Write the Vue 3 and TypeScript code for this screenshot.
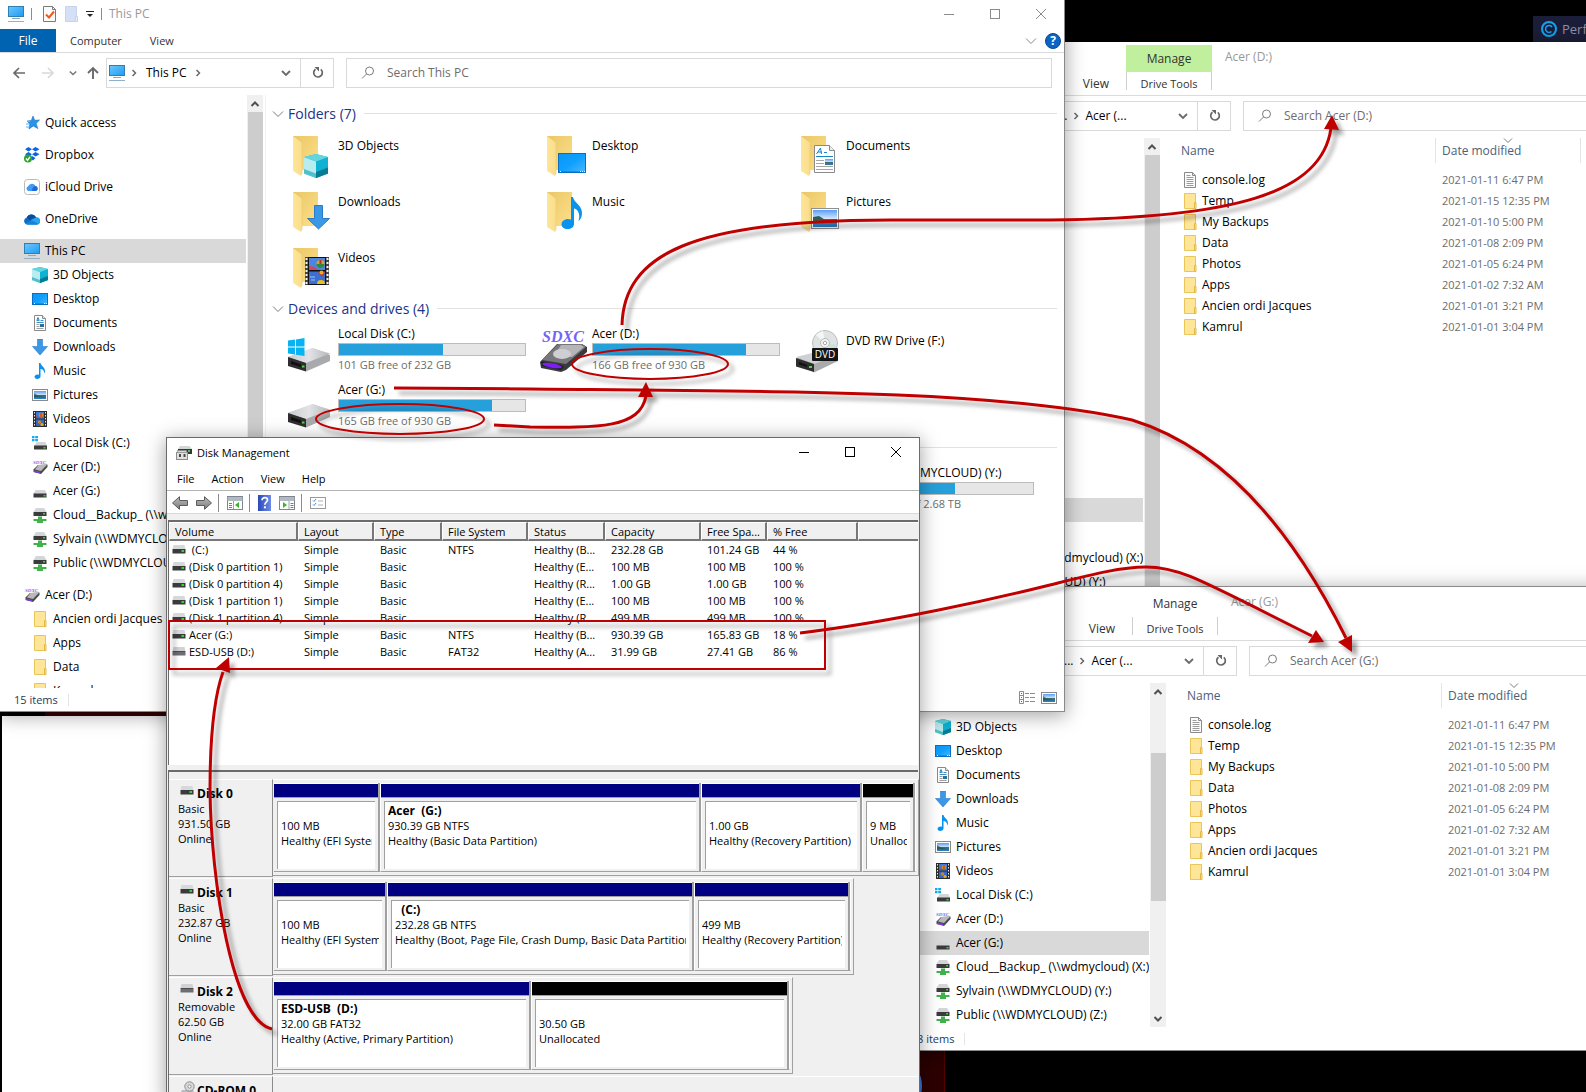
<script setup lang="ts">
interface NavItem { label: string; icon: string; level: 1 | 2; gap?: boolean }
interface Part { name: string; size: string; status: string; width: number; free?: boolean }
interface Disk { title: string; icon: string; kind: string; size: string; state: string; parts: Part[] }

const places: NavItem[] = [
  { label: '3D Objects', icon: 'cube', level: 2 },
  { label: 'Desktop', icon: 'desktop', level: 2 },
  { label: 'Documents', icon: 'document', level: 2 },
  { label: 'Downloads', icon: 'download', level: 2 },
  { label: 'Music', icon: 'music', level: 2 },
  { label: 'Pictures', icon: 'picture', level: 2 },
  { label: 'Videos', icon: 'video', level: 2 },
  { label: 'Local Disk (C:)', icon: 'localdisk', level: 2 },
]
const drives: NavItem[] = [
  { label: 'Acer (D:)', icon: 'sdxc', level: 2 },
  { label: 'Acer (G:)', icon: 'drive', level: 2 },
  { label: 'Cloud__Backup_ (\\\\wdmycloud) (X:)', icon: 'netdrive', level: 2 },
  { label: 'Sylvain (\\\\WDMYCLOUD) (Y:)', icon: 'netdrive', level: 2 },
]
const publicDrive: NavItem = { label: 'Public (\\\\WDMYCLOUD) (Z:)', icon: 'netdrive', level: 2 }

const pcNav: NavItem[] = [
  { label: 'Quick access', icon: 'star', level: 1, gap: true },
  { label: 'Dropbox', icon: 'dropbox', level: 1, gap: true },
  { label: 'iCloud Drive', icon: 'icloud', level: 1, gap: true },
  { label: 'OneDrive', icon: 'onedrive', level: 1, gap: true },
  { label: 'This PC', icon: 'pc', level: 1 },
  ...places,
  ...drives,
  { ...publicDrive, gap: true },
  { label: 'Acer (D:)', icon: 'sdxc', level: 1 },
  { label: 'Ancien ordi Jacques', icon: 'folder', level: 2 },
  { label: 'Apps', icon: 'folder', level: 2 },
  { label: 'Data', icon: 'folder', level: 2 },
  { label: 'Kamrul', icon: 'folder', level: 2 },
]

const folders = [
  { name: '3D Objects', icon: 'cube-l' },
  { name: 'Desktop', icon: 'desktop-l' },
  { name: 'Documents', icon: 'document-l' },
  { name: 'Downloads', icon: 'download-l' },
  { name: 'Music', icon: 'music-l' },
  { name: 'Pictures', icon: 'picture-l' },
  { name: 'Videos', icon: 'video-l' },
]
const devices = [
  { name: 'Local Disk (C:)', icon: 'localdisk-l', used: 56, free: '101 GB free of 232 GB' },
  { name: 'Acer (D:)', icon: 'sdxc-l', used: 82, free: '166 GB free of 930 GB' },
  { name: 'DVD RW Drive (F:)', icon: 'dvd-l', used: 0, free: '' },
  { name: 'Acer (G:)', icon: 'drive-l', used: 82, free: '165 GB free of 930 GB' },
]

const files = [
  { name: 'console.log', date: '2021-01-11 6:47 PM', icon: 'log' },
  { name: 'Temp', date: '2021-01-15 12:35 PM', icon: 'folder' },
  { name: 'My Backups', date: '2021-01-10 5:00 PM', icon: 'folder' },
  { name: 'Data', date: '2021-01-08 2:09 PM', icon: 'folder' },
  { name: 'Photos', date: '2021-01-05 6:24 PM', icon: 'folder' },
  { name: 'Apps', date: '2021-01-02 7:32 AM', icon: 'folder' },
  { name: 'Ancien ordi Jacques', date: '2021-01-01 3:21 PM', icon: 'folder' },
  { name: 'Kamrul', date: '2021-01-01 3:04 PM', icon: 'folder' },
]
const driveWindows = [
  { id: 'd', title: 'Acer (D:)', nav: drives, items: '' },
  { id: 'g', title: 'Acer (G:)', nav: [...places, ...drives, publicDrive], items: '8 items' },
]

const volumeHead = ['Volume', 'Layout', 'Type', 'File System', 'Status', 'Capacity', 'Free Spa...', '% Free', '']
const volumes = [
  ['\u00a0(C:)', 'Simple', 'Basic', 'NTFS', 'Healthy (B...', '232.28 GB', '101.24 GB', '44 %'],
  ['(Disk 0 partition 1)', 'Simple', 'Basic', '', 'Healthy (E...', '100 MB', '100 MB', '100 %'],
  ['(Disk 0 partition 4)', 'Simple', 'Basic', '', 'Healthy (R...', '1.00 GB', '1.00 GB', '100 %'],
  ['(Disk 1 partition 1)', 'Simple', 'Basic', '', 'Healthy (E...', '100 MB', '100 MB', '100 %'],
  ['(Disk 1 partition 4)', 'Simple', 'Basic', '', 'Healthy (R...', '499 MB', '499 MB', '100 %'],
  ['Acer (G:)', 'Simple', 'Basic', 'NTFS', 'Healthy (B...', '930.39 GB', '165.83 GB', '18 %'],
  ['ESD-USB (D:)', 'Simple', 'Basic', 'FAT32', 'Healthy (A...', '31.99 GB', '27.41 GB', '86 %'],
]
const disks: Disk[] = [
  { title: 'Disk 0', icon: 'hdd', kind: 'Basic', size: '931.50 GB', state: 'Online', parts: [
    { name: '', size: '100 MB', status: 'Healthy (EFI System Partition)', width: 107 },
    { name: 'Acer\u00a0 (G:)', size: '930.39 GB NTFS', status: 'Healthy (Basic Data Partition)', width: 321 },
    { name: '', size: '1.00 GB', status: 'Healthy (Recovery Partition)', width: 161 },
    { name: '', size: '9 MB', status: 'Unallocated', width: 53, free: true },
  ] },
  { title: 'Disk 1', icon: 'hdd', kind: 'Basic', size: '232.87 GB', state: 'Online', parts: [
    { name: '', size: '100 MB', status: 'Healthy (EFI System Partition)', width: 114 },
    { name: '\u00a0 (C:)', size: '232.28 GB NTFS', status: 'Healthy (Boot, Page File, Crash Dump, Basic Data Partition)', width: 307 },
    { name: '', size: '499 MB', status: 'Healthy (Recovery Partition)', width: 156 },
  ] },
  { title: 'Disk 2', icon: 'usb', kind: 'Removable', size: '62.50 GB', state: 'Online', parts: [
    { name: 'ESD-USB\u00a0 (D:)', size: '32.00 GB FAT32', status: 'Healthy (Active, Primary Partition)', width: 258 },
    { name: '', size: '30.50 GB', status: 'Unallocated', width: 258, free: true },
  ] },
]
</script>

<template>
  <div class="desktop">
    <svg class="sprite" aria-hidden="true">
      <defs>
        <linearGradient id="gScreen" x1="0" y1="0" x2="1" y2="1"><stop offset="0" stop-color="#6cc8ff" /><stop offset="1" stop-color="#1e9bf0" /></linearGradient>
        <linearGradient id="gDesk" x1="0" y1="0" x2="1" y2="1"><stop offset="0" stop-color="#0a96f5" /><stop offset=".5" stop-color="#0fa0ff" /><stop offset="1" stop-color="#4cb8ff" /></linearGradient>
        <linearGradient id="gFold" x1="0" y1="0" x2="1" y2="1"><stop offset="0" stop-color="#e9c767" /><stop offset="1" stop-color="#ffe08a" /></linearGradient>
        <linearGradient id="gFlap" x1="0" y1="0" x2="1" y2="0"><stop offset="0" stop-color="#ffe697" /><stop offset="1" stop-color="#f8dd8c" /></linearGradient>
        <linearGradient id="gTop" x1="0" y1="0" x2="1" y2="0"><stop offset="0" stop-color="#c9cacd" /><stop offset=".5" stop-color="#e2e3e6" /><stop offset="1" stop-color="#b5b6b9" /></linearGradient>
        <linearGradient id="gSky" x1="0" y1="0" x2="0" y2="1"><stop offset="0" stop-color="#5b9df5" /><stop offset=".5" stop-color="#cfe6fb" /><stop offset=".55" stop-color="#3f6d68" /><stop offset="1" stop-color="#3778b8" /></linearGradient>
        <linearGradient id="gHelp" x1="0" y1="0" x2="1" y2="0"><stop offset="0" stop-color="#2a49b8" /><stop offset="1" stop-color="#6d8be8" /></linearGradient>
        <linearGradient id="gArrow" x1="0" y1="0" x2="0" y2="1"><stop offset="0" stop-color="#bdbdbd" /><stop offset="1" stop-color="#7a7a7a" /></linearGradient>
      </defs>
      <symbol id="pc" viewBox="0 0 16 16"><rect x=".5" y=".5" width="15" height="10" fill="url(#gScreen)" stroke="#2f7fb5" /><path d="M4 12.5h8" stroke="#8ea8bd" /><path d="M0 15.500h16" stroke="#8fb0ca" /></symbol>
      <symbol id="check" viewBox="0 0 14 18"><path d="M.5 1.500h9l3 3v12H.5z" fill="#fafafa" stroke="#7a7a7a" /><path d="M9.500 1.500v3h3" fill="none" stroke="#7a7a7a" /><path d="M3 9.500l3 3 5-6" fill="none" stroke="#ee5a1c" stroke-width="2" /></symbol>
      <symbol id="newdoc" viewBox="0 0 14 18"><path d="M.5 1.500h11v11l1 4H.5z" fill="#d3e0f5" stroke="#c5d4ee" /><path d="M10.500 11.500h2v5h-2z" fill="#e8effa" stroke="#c5d4ee" /></symbol>
      <symbol id="star" viewBox="0 0 16 16"><path d="M9 1l1.700 4.300L15.500 5l-3.400 3.400 1.700 5.100L9.200 11 5 14l.8-5L3 6l4.300-.4z" fill="#2a93e8" stroke="#1674c4" stroke-width=".6" /><path d="M3 6.500h3M2 9h3M2 12h3" stroke="#58b1f5" /></symbol>
      <symbol id="dropbox" viewBox="0 0 16 16"><path d="M4.500 0L8 2.200 4.500 4.400 1 2.200zM11.500 0L15.500 2.200 11.500 4.400 8 2.200zM4.500 5L8 7.200 4.500 9.400 1 7.200zM11.500 5l4 2.200-4 2.200L8 7.200zM8 9l3.500 2L9 13.500 6 11z" fill="#0b63e8" /><circle cx="4" cy="11.500" r="4" fill="#2ea32e" /><path d="M2 11.500l1.500 1.800L6 9.800" stroke="#fff" stroke-width="1.400" fill="none" /></symbol>
      <symbol id="icloud" viewBox="0 0 16 16"><rect x=".5" y=".5" width="15" height="15" rx="3" fill="#fff" stroke="#b9b9b9" /><path d="M4.500 12a2.500 2.500 0 0 1-.3-4.800A4 4 0 0 1 11.500 7a2.600 2.600 0 0 1 .5 5z" fill="#3e9bf7" /><path d="M8 12c0-3 1.500-4.500 3.500-5a2.600 2.600 0 0 1 .5 5z" fill="#2468d8" /></symbol>
      <symbol id="onedrive" viewBox="0 0 16 16"><path d="M3.500 13.500A3.500 3.500 0 0 1 2.800 6.600 5 5 0 0 1 12 6.500a3.500 3.500 0 0 1 1 7z" fill="#0a6cc8" /><path d="M2.800 6.600A5 5 0 0 1 12 6.500L6 9.500z" fill="#0a4d9e" /><path d="M3.500 13.500l4-5 4.500-2a3.500 3.500 0 0 1 1 7z" fill="#28a4ea" /><path d="M1.500 12.500l6-3.500 7 4c-.5.400-1 .500-1.500.500h-9.500c-.8 0-1.500-.4-2-1z" fill="#1583d8" /></symbol>
      <symbol id="cube" viewBox="0 0 16 16"><path d="M8 0l8 2v11l-8 3-8-3V2z" fill="#28bcd2" /><path d="M0 2l8 3v11l-8-3z" fill="#b9ecee" /><path d="M0 10l8 3v3l-8-3z" fill="#52c0cc" /><path d="M8 5l8-3v11l-8 3z" fill="#10b2d4" /><path d="M8 12l8-3v4l-8 3z" fill="#067c92" /><path d="M8 0l8 2-8 3-8-3z" fill="#63d5de" /></symbol>
      <symbol id="desktop" viewBox="0 0 16 16"><rect x=".5" y="2.500" width="15" height="11" fill="url(#gDesk)" stroke="#0b6fc0" /><path d="M1 13h11" stroke="#0b6fc0" /><path d="M12 12.500h1M14 12.500h1M2 12.500h1" stroke="#fff" /></symbol>
      <symbol id="document" viewBox="0 0 16 16"><path d="M2.500.5h8l3 3v12h-11z" fill="#fff" stroke="#8a8a8a" /><path d="M10.500.5v3h3" fill="#e8e8e8" stroke="#8a8a8a" /><path d="M4.500 5.500h3M8.500 5.500h3M4.500 7.500h7" stroke="#3a8ec8" /><path d="M5 5l1-2.500L7 5" stroke="#1a7cc0" fill="none" /><path d="M4.500 9.500h3M4.500 11.500h3M4.500 13.500h7" stroke="#a0a0a0" /><rect x="8" y="9" width="4" height="3" fill="#2d6f9c" /></symbol>
      <symbol id="download" viewBox="0 0 16 16"><path d="M5.500 0h5v7.500H15.500L8 16 .5 7.500h5z" fill="#3a98e8" stroke="#2a7cc8" stroke-width=".6" /></symbol>
      <symbol id="music" viewBox="0 0 16 16"><path d="M7 0h1.500c.5 3 4.500 4 4.500 8 0 1-.5 2-1 2.500C12.500 7 10 6 8.500 6v7.500C8.500 15 7 16 5.200 16 3.500 16 2.500 15 2.500 13.800c0-1.300 1.300-2.300 3-2.300.6 0 1 .1 1.500.3z" fill="#0a93ee" /></symbol>
      <symbol id="picture" viewBox="0 0 16 16"><rect x=".5" y="2.500" width="15" height="11" fill="#fff" stroke="#8a8a8a" /><rect x="2" y="4" width="12" height="8" fill="url(#gSky)" /><path d="M2 6l4 2.500 8 2V12H2z" fill="#1f5a55" opacity=".7" /><path d="M2 10.500h12V12H2z" fill="#2f7ec4" /></symbol>
      <symbol id="video" viewBox="0 0 16 16"><rect x="1" y="0" width="14" height="16" fill="#2c2c2c" /><rect x="4" y="1" width="8" height="6.500" fill="#3f78d8" /><rect x="4" y="8.500" width="8" height="6.500" fill="#3566c4" /><path d="M2.500 1v14M13.500 1v14" stroke="#e8e8e8" stroke-dasharray="1.500 1.500" /><circle cx="9" cy="4" r="2.300" fill="#d88a1c" /><path d="M9 2v4" stroke="#c02a2a" /><path d="M4 5l4 2H4z" fill="#c03a4a" /><circle cx="7.500" cy="11" r="1.800" fill="#c8871e" /><circle cx="10" cy="13.500" r="1.500" fill="#e8b020" /></symbol>
      <symbol id="localdisk" viewBox="0 0 16 16"><path d="M0 1h2.500v2.200H0zM3.200 1H6v2.200H3.200zM0 4h2.500v2.200H0zM3.200 4H6v2.200H3.200z" fill="#12aef0" /><path d="M4.500 7h9l1.500 4H2.500z" fill="#d3d5d8" /><rect x="2" y="10.500" width="13" height="4" fill="#3b3b3b" /><rect x="11.500" y="12" width="2" height="1.500" fill="#2fd63a" /></symbol>
      <symbol id="drive" viewBox="0 0 16 16"><path d="M3.500 7h9.500l2 4h-13.500z" fill="#d3d5d8" /><rect x="1.500" y="10.500" width="13" height="4" fill="#3b3b3b" /><rect x="11.500" y="12" width="2" height="1.500" fill="#2fd63a" /></symbol>
      <symbol id="netdrive" viewBox="0 0 16 16"><path d="M4 1h8l2.500 4h-13z" fill="#d3d5d8" /><rect x="1.500" y="5" width="13" height="4" fill="#3b3b3b" /><rect x="11" y="6" width="2" height="1.500" fill="#2fd63a" /><path d="M6 9.500h4v2.500h4.500v2H11v2H5v-2H1.500v-2H6z" fill="#3fb24a" /></symbol>
      <symbol id="sdxc" viewBox="0 0 16 16"><text x="1" y="5" font-family="Liberation Serif, serif" font-size="5" font-style="italic" font-weight="700" fill="#7b6bf0">SDXC</text><path d="M6 6l9.500-.5V8L9 15l-7.500-2v-2.500z" fill="#4a4a4c" /><path d="M6.500 6l8.500-.3-6 6.300-6-1.500z" fill="#b9b9bd" /><path d="M2 12.200l6 1.300" stroke="#8a35f0" stroke-width="1.500" /></symbol>
      <symbol id="folder" viewBox="0 0 16 16"><path d="M2.500.5h11v15h-11z" fill="#ffe597" stroke="#eac65a" /><path d="M12.500 9.500h1.500v6h-1.500z" fill="#ffe9a8" stroke="#e3b944" /></symbol>
      <symbol id="log" viewBox="0 0 16 16"><path d="M2.500.5h8l3 3v12h-11z" fill="#fbfbfb" stroke="#8a8a8a" /><path d="M10.500.5v3h3" fill="none" stroke="#8a8a8a" /><path d="M4.500 3.500h4M4.500 5.500h7M4.500 7.500h7M4.500 9.500h7M4.500 11.500h7M4.500 13.500h7" stroke="#9c9c9c" /></symbol>
      <symbol id="hdd" viewBox="0 0 14 10"><path d="M1.500 0h11l1 4.500h-13z" fill="#d6d8dc" /><rect x=".5" y="4" width="13" height="4.500" fill="#3b3b3b" /><rect x="9.500" y="5" width="2.500" height="2" fill="#2fd63a" /></symbol>
      <symbol id="usb" viewBox="0 0 14 10"><path d="M1.500 0h11l1 4.500h-13z" fill="#d0d2d6" /><rect x=".5" y="4" width="13" height="4.500" fill="#6c6e72" /><path d="M1 4.500h12" stroke="#4c4c4c" /></symbol>
      <symbol id="cdrom" viewBox="0 0 16 16"><path d="M2 9h11l2 4v3H0v-3z" fill="#b9bbbe" /><rect x="0" y="12" width="15" height="4" fill="#3b3b3b" /><circle cx="9.500" cy="5.500" r="4.700" fill="#d9d9dc" stroke="#8c8c8c" /><circle cx="9.500" cy="5.500" r="1.600" fill="#fff" stroke="#8c8c8c" /></symbol>
      <symbol id="dm" viewBox="0 0 16 16"><path d="M4 1h9.500L16 4H2z" fill="#d3d5d8" /><rect x="2" y="4" width="14" height="5" fill="#33373a" /><rect x="12" y="5" width="2" height="2" fill="#2fd63a" /><rect x=".5" y="7.500" width="11" height="7" fill="#e0e0e0" stroke="#8c8c8c" /><rect x="1.500" y="5.500" width="9" height="2" fill="#d8d8d8" stroke="#909090" stroke-width=".6" /><path d="M3 9h2v3H3zM7.500 9h2v3h-2z" fill="#4a4a4a" /></symbol>

      <symbol id="folder-base" viewBox="0 0 48 48" overflow="visible"><path d="M3 4h25v34H3z" fill="url(#gFold)" /><path d="M3 4l9 7v31l-1 2-8-5z" fill="url(#gFlap)" /><path d="M12 11v31" stroke="#eecb6b" stroke-width=".6" /></symbol>
      <symbol id="cube-l" viewBox="0 0 48 48"><use href="#folder-base" width="48" height="48" /><use href="#cube" x="14" y="22" width="24" height="24" /></symbol>
      <symbol id="desktop-l" viewBox="0 0 48 48"><use href="#folder-base" width="48" height="48" /><rect x="14.500" y="21.500" width="27" height="19" fill="url(#gDesk)" stroke="#0b6fc0" /><path d="M15 40h26" stroke="#0b6fc0" /><path d="M16 39.500h1M36 39.500h1M38 39.500h1M40 39.500h1" stroke="#fff" /></symbol>
      <symbol id="document-l" viewBox="0 0 48 48"><use href="#folder-base" width="48" height="48" /><path d="M16.500 13.500h15l5 5v22h-20z" fill="#fff" stroke="#8a8a8a" /><path d="M31.500 13.500v5h5" fill="#eee" stroke="#8a8a8a" /><path d="M18.500 22l4-6 1 6M20 20h4M26 20.500h3M18 24.500h17" stroke="#1a84c8" fill="none" /><path d="M18 28.500h8M18 31.500h8M18 34.500h17M18 37.500h17" stroke="#a6a6a6" /><rect x="27" y="27" width="8" height="6" fill="url(#gSky)" /></symbol>
      <symbol id="download-l" viewBox="0 0 48 48"><use href="#folder-base" width="48" height="48" /><path d="M24.500 17.500h8v13h7L28.500 41 17.500 30.500h7z" fill="#3a98e8" stroke="#2a7cc8" /></symbol>
      <symbol id="music-l" viewBox="0 0 48 48"><use href="#folder-base" width="48" height="48" /><path d="M27 9h2c1 6 9 8 9 16 0 4-1.500 6.500-3.500 8 2.500-8-1.500-12-4.500-12.500V36c0 3-2.800 5-6.500 5-3.500 0-6-1.800-6-4.800 0-2.800 3-5.200 6.500-5.200 1 0 2.200.2 3 .6z" fill="#0a93ee" /></symbol>
      <symbol id="picture-l" viewBox="0 0 48 48"><use href="#folder-base" width="48" height="48" /><rect x="13.500" y="20.500" width="27" height="20" fill="#fff" stroke="#8f8f8f" /><rect x="15" y="22" width="24" height="17" fill="url(#gSky)" /><path d="M15 29l6-1 8 5 10 1v2H15z" fill="#2a5f55" /><path d="M15 35h24v4H15z" fill="#2f7ec4" /></symbol>
      <symbol id="video-l" viewBox="0 0 48 48"><use href="#folder-base" width="48" height="48" /><rect x="15" y="13" width="24" height="28" fill="#444" /><path d="M16.500 14v26M37.500 14v26" stroke="#f2f2f2" stroke-width="2" stroke-dasharray="2 2" /><rect x="18.500" y="13.500" width="17" height="13" fill="#4a86e0" stroke="#111" /><rect x="18.500" y="27" width="17" height="13.500" fill="#3c70d0" stroke="#111" /><circle cx="30.500" cy="20" r="4" fill="#e0a020" /><path d="M30.500 16v8" stroke="#b8302a" stroke-width="2" /><path d="M26.500 20a4 4 0 0 0 8 0z" fill="#2d8a42" /><path d="M19 22l6 1 3 3h-9z" fill="#d04858" /><path d="M28 28h7l-3 5z" fill="#c83028" /><circle cx="31.500" cy="28.500" r="2" fill="#e8b020" /><path d="M27 40a4 4 0 0 1 8 0z" fill="#e8c020" /><path d="M20 33h5M21 36h4" stroke="#9fc2f0" /></symbol>
      <symbol id="drive-l" viewBox="0 0 48 48" overflow="visible"><path d="M-2 30L24 21.500l16 6.500v6L16 44.500z" fill="#a9aaad" /><path d="M-2 30L22 21l18 5.500L16 36z" fill="url(#gTop)" /><path d="M-2 30l18 6v8.500l-18-5.500z" fill="#2e2e30" /><path d="M1 34l10 3.500v2.500L1 37z" fill="#101012" /><rect x="12" y="38.500" width="2.500" height="2" fill="#4fd83a" /></symbol>
      <symbol id="localdisk-l" viewBox="0 0 48 48" overflow="visible"><use href="#drive-l" width="48" height="48" /><path d="M-2 13.500l7-1v7h-7zM6 12.400l8.500-1.400v8.500H6zM-2 20.500h7v7l-7-1zM6 20.500h8.500V29L6 27.700z" fill="#06b4f2" /></symbol>
      <symbol id="sdxc-l" viewBox="0 0 48 48" overflow="visible"><path d="M13 17l25 0 5 3v5L22 43l-5 2-20-4-1-6z" fill="#3a3a3c" /><path d="M14 17h24l4 3-20 17-24-4z" fill="#77777b" /><path d="M17 18h20l3 2-12 10-17-2z" fill="#b5b5b9" /><ellipse cx="18" cy="27" rx="9" ry="5" fill="#cfcfd3" /><path d="M-3 34.500l20 3.500 3 2-3 3-19-4z" fill="#1f1f22" /><ellipse cx="8" cy="38.500" rx="10" ry="2.300" transform="rotate(10 8 38.500)" fill="#7b1ff5" /><text x="-2" y="15" font-family="Liberation Serif, serif" font-size="16" font-style="italic" font-weight="700" fill="#7466f2">SDXC</text></symbol>
      <symbol id="dvd-l" viewBox="0 0 48 48" overflow="visible"><path d="M-2 31l20-5 22 3v5L16 45.500z" fill="#a9aaad" /><path d="M-2 30l20-5 22 3L16 37z" fill="#cfd0d3" /><path d="M-2 31l18 6v8l-18-5.500z" fill="#2e2e30" /><path d="M1 35l8 3v2l-8-2.500z" fill="#101012" /><rect x="11" y="39" width="3" height="2" fill="#4fd83a" /><circle cx="27" cy="16" r="12.500" fill="#dfe3e3" stroke="#b9bdbd" /><path d="M27 16l-9-8a12 12 0 0 1 7-4z" fill="#f3f7f5" /><path d="M27 16l9 8a12 12 0 0 0 3-6z" fill="#c9e2da" /><circle cx="27" cy="16" r="4.500" fill="#f2f2f2" stroke="#b9b9b9" /><circle cx="27" cy="16" r="1.700" fill="#fff" stroke="#a9a9a9" /><rect x="14" y="21" width="26" height="13" rx="1" fill="#141414" /><text x="27" y="31" font-family="Open Sans, sans-serif" font-size="10" text-anchor="middle" fill="#fff">DVD</text></symbol>
      <symbol id="search" viewBox="0 0 14 14"><circle cx="8.500" cy="5" r="4" fill="none" stroke="#7d7d7d" /><path d="M5.500 8L1 12.500" stroke="#7d7d7d" /></symbol>
      <symbol id="refresh" viewBox="0 0 14 14"><path d="M4.500 3.200A4.300 4.300 0 1 0 9.800 3.400" fill="none" stroke="#666" stroke-width="1.700" /><path d="M3.500 1h4.500v4.500z" fill="#666" /></symbol>
      <symbol id="chev-d" viewBox="0 0 10 10"><path d="M1 3l4 4 4-4" fill="none" stroke="currentColor" stroke-width="1.800" /></symbol>
      <symbol id="chev-thin" viewBox="0 0 12 12"><path d="M1 3.500l5 5 5-5" fill="none" stroke="currentColor" /></symbol>
      <symbol id="chev-r" viewBox="0 0 10 10"><path d="M3.500 2l3 3-3 3" fill="none" stroke="#6a6a6a" stroke-width="1.500" /></symbol>
      <symbol id="tri-u" viewBox="0 0 10 10"><path d="M1.500 7L5 3.500 8.500 7" fill="none" stroke="#505050" stroke-width="2" /></symbol>
      <symbol id="min" viewBox="0 0 12 12"><path d="M1 6.500h10" stroke="currentColor" /></symbol>
      <symbol id="max" viewBox="0 0 12 12"><rect x="1.500" y="1.500" width="9" height="9" fill="none" stroke="currentColor" /></symbol>
      <symbol id="close" viewBox="0 0 12 12"><path d="M1 1l10 10M11 1L1 11" stroke="currentColor" /></symbol>
    </svg>

    <div class="tab-chip">
      <svg width="16" height="16" viewBox="0 0 16 16"><circle cx="8" cy="8" r="7" fill="none" stroke="#12a5f5" stroke-width="2" /><path d="M11 6a3.500 3.500 0 1 0-.5 4.500" fill="none" stroke="#12a5f5" stroke-width="1.500" /></svg>
      <span>Perf</span>
    </div>
    <div class="red-strip"></div>
    <div class="blank-window"></div>
    <div class="red-tile"><i></i></div>

    <section v-for="w in driveWindows" :key="w.id" class="window explorer" :class="'win-' + w.id">
      <header class="drive-ribbon">
        <div class="ribbon-left"><button class="tab">View</button></div>
        <div class="tool-tab">
          <div class="manage">Manage</div>
          <button class="tools">Drive Tools</button>
        </div>
        <h2 class="faded">{{ w.title }}</h2>
      </header>
      <div class="bar">
        <div class="address drive-address">
          <span>...</span>
          <svg class="i10"><use href="#chev-r" /></svg>
          <span class="crumb">Acer (...</span>
          <button class="drop" aria-label="Previous locations"><svg class="i10"><use href="#chev-d" /></svg></button>
          <button class="refresh" aria-label="Refresh"><svg class="i14"><use href="#refresh" /></svg></button>
        </div>
        <label class="search">
          <svg class="i14"><use href="#search" /></svg>
          <input type="text" :placeholder="'Search ' + w.title" :aria-label="'Search ' + w.title" />
        </label>
      </div>
      <div class="body">
        <nav class="tree">
          <a v-for="n in w.nav" :key="n.label" href="#" class="node l2" :class="{ on: n.label === w.title }">
            <svg class="i16"><use :href="'#' + n.icon" /></svg>{{ n.label }}
          </a>
        </nav>
        <div class="scroll">
          <svg class="i10"><use href="#tri-u" /></svg>
          <div class="thumb"></div>
          <svg class="i10 down"><use href="#tri-u" /></svg>
        </div>
        <table class="files">
          <colgroup><col class="c-name" /><col class="c-date" /><col /></colgroup>
          <thead><tr>
            <th><div class="th">Name</div></th>
            <th><div class="th">Date modified<svg class="sort" width="10" height="6" viewBox="0 0 10 6"><path d="M1 .5l4 4 4-4" fill="none" stroke="#7a7a7a" /></svg></div></th>
            <th></th>
          </tr></thead>
          <tbody>
            <tr v-for="f in files" :key="f.name">
              <td><div class="file"><svg class="i16"><use :href="'#' + f.icon" /></svg>{{ f.name }}</div></td>
              <td class="date">{{ f.date }}</td>
              <td></td>
            </tr>
          </tbody>
        </table>
      </div>
      <footer class="status"><span>{{ w.items }}</span><i v-if="w.items"></i></footer>
    </section>

    <section class="window explorer win-pc">
      <header class="title">
        <svg class="i16"><use href="#pc" /></svg><i class="sep"></i>
        <svg class="quick"><use href="#check" /></svg><svg class="quick"><use href="#newdoc" /></svg>
        <svg class="quick-more" width="8" height="8" viewBox="0 0 8 8"><path d="M0 1.500h8" stroke="#222" /><path d="M1 4h6L4 7z" fill="#222" /></svg><i class="sep"></i>
        <h2 class="faded">This PC</h2>
        <div class="caption">
          <button aria-label="Minimize"><svg class="i12"><use href="#min" /></svg></button>
          <button aria-label="Maximize"><svg class="i12"><use href="#max" /></svg></button>
          <button aria-label="Close"><svg class="i12"><use href="#close" /></svg></button>
        </div>
      </header>
      <div class="tabs">
        <button class="file-tab">File</button><button class="tab">Computer</button><button class="tab">View</button>
        <div class="tabs-end"><svg class="i12"><use href="#chev-thin" /></svg><button class="help" aria-label="Help">?</button></div>
      </div>
      <div class="bar">
        <div class="history">
          <svg width="14" height="14" viewBox="0 0 14 14"><path d="M13 7H2M7 2L2 7l5 5" fill="none" stroke="#6a6a6a" stroke-width="1.700" /></svg>
          <svg width="14" height="14" viewBox="0 0 14 14"><path d="M1 7h11M7 2l5 5-5 5" fill="none" stroke="#d9d9d9" stroke-width="1.700" /></svg>
          <svg width="8" height="8" viewBox="0 0 10 10"><path d="M1 3l4 4 4-4" fill="none" stroke="#777" stroke-width="1.800" /></svg>
          <svg width="14" height="14" viewBox="0 0 14 14"><path d="M7 13V2M2 7l5-5 5 5" fill="none" stroke="#6a6a6a" stroke-width="1.900" /></svg>
        </div>
        <div class="address">
          <svg class="i16"><use href="#pc" /></svg>
          <svg class="i10"><use href="#chev-r" /></svg>
          <span class="crumb">This PC</span>
          <svg class="i10"><use href="#chev-r" /></svg>
          <button class="drop" aria-label="Previous locations"><svg class="i10"><use href="#chev-d" /></svg></button>
          <button class="refresh" aria-label="Refresh"><svg class="i14"><use href="#refresh" /></svg></button>
        </div>
        <label class="search">
          <svg class="i14"><use href="#search" /></svg>
          <input type="text" placeholder="Search This PC" aria-label="Search This PC" />
        </label>
      </div>
      <div class="body">
        <nav class="tree">
          <a v-for="(n, i) in pcNav" :key="i" href="#" class="node" :class="['l' + n.level, { on: n.label === 'This PC', gap: n.gap }]">
            <svg class="i16"><use :href="'#' + n.icon" /></svg>{{ n.label }}
          </a>
        </nav>
        <div class="scroll">
          <svg class="i10"><use href="#tri-u" /></svg>
          <div class="thumb"></div>
        </div>
        <main class="content">
          <h3 class="group"><svg class="i12"><use href="#chev-thin" /></svg>Folders (7)</h3>
          <div class="tiles">
            <div v-for="f in folders" :key="f.name" class="tile">
              <svg class="i48"><use :href="'#' + f.icon" /></svg>
              <div class="info single">{{ f.name }}</div>
            </div>
          </div>
          <h3 class="group"><svg class="i12"><use href="#chev-thin" /></svg>Devices and drives (4)</h3>
          <div class="tiles">
            <div v-for="d in devices" :key="d.name" class="tile">
              <svg class="i48"><use :href="'#' + d.icon" /></svg>
              <div class="info" :class="{ single: !d.free }">
                <span>{{ d.name }}</span>
                <template v-if="d.free">
                  <div class="meter"><b :style="{ width: d.used + '%' }"></b></div>
                  <span class="muted">{{ d.free }}</span>
                </template>
              </div>
            </div>
          </div>
          <h3 class="group"></h3>
          <div class="tiles">
            <div class="tile third">
              <div class="info">
                <span>Sylvain (\\WDMYCLOUD) (Y:)</span>
                <div class="meter"><b :style="{ width: '58%' }"></b></div>
                <span class="muted">1.12 TB free of 2.68 TB</span>
              </div>
            </div>
          </div>
        </main>
      </div>
      <footer class="status">
        <span>15 items</span><i></i>
        <div class="views">
          <svg width="16" height="14" viewBox="0 0 16 14"><path d="M.5.500h4v12h-4zM.5 4.500h4M.5 8.500h4" fill="none" stroke="#8c8c8c" /><path d="M6 2.500h4M11 2.500h5M6 6.500h4M11 6.500h5M6 10.500h4M11 10.500h5" stroke="#8c8c8c" /><path d="M2 2.500h1M2 6.500h1" stroke="#2a7cc8" /><path d="M2 10.500h1" stroke="#d02020" /></svg>
          <svg class="i16"><use href="#picture" /></svg>
        </div>
      </footer>
    </section>

    <section class="window dm">
      <header class="title">
        <svg class="i16"><use href="#dm" /></svg>
        <h2>Disk Management</h2>
        <div class="caption">
          <button aria-label="Minimize"><svg class="i12"><use href="#min" /></svg></button>
          <button aria-label="Maximize"><svg class="i12"><use href="#max" /></svg></button>
          <button aria-label="Close"><svg class="i12"><use href="#close" /></svg></button>
        </div>
      </header>
      <div class="menu"><button>File</button><button>Action</button><button>View</button><button>Help</button></div>
      <div class="tools-row">
        <button aria-label="Back"><svg width="16" height="14" viewBox="0 0 16 14"><path d="M.5 7L7.500.7v3.800h8v5h-8v3.800z" fill="url(#gArrow)" stroke="#5c5c5c" /></svg></button>
        <button aria-label="Forward"><svg width="16" height="14" viewBox="0 0 16 14"><path d="M15.500 7L8.500.7v3.800h-8v5h8v3.800z" fill="url(#gArrow)" stroke="#5c5c5c" /></svg></button>
        <i></i>
        <button aria-label="Show console tree"><svg width="16" height="14" viewBox="0 0 16 14"><rect x=".5" y=".5" width="15" height="13" fill="#fff" stroke="#7d8590" /><path d="M0 2h16M0 4h16" stroke="#9aa3ad" stroke-width="1.500" /><path d="M2 7.500h3M2 9.500h3M2 11.500h3" stroke="#4f86b8" /><path d="M6.500 5v8" stroke="#9aa3ad" /><path d="M12 6v6L8 9z" fill="#3cb428" /></svg></button>
        <i></i>
        <button aria-label="Help"><svg width="13" height="16" viewBox="0 0 13 16"><rect width="13" height="16" fill="url(#gHelp)" /><path d="M4 5.200C4 1.800 9.500 2 9.500 5c0 2-2.700 2.200-2.700 4.800" fill="none" stroke="#fff" stroke-width="1.700" /><rect x="5.900" y="11.300" width="2" height="2" fill="#fff" /></svg></button>
        <button aria-label="Show action pane"><svg width="16" height="14" viewBox="0 0 16 14"><rect x=".5" y=".5" width="15" height="13" fill="#fff" stroke="#7d8590" /><path d="M0 2h16M0 4h16" stroke="#9aa3ad" stroke-width="1.500" /><path d="M11.500 7.500h3M11.500 9.500h3M11.500 11.500h3" stroke="#4f86b8" /><path d="M10 5v8" stroke="#9aa3ad" /><path d="M4 6v6l4-3z" fill="#3cb428" /></svg></button>
        <i></i>
        <button aria-label="Properties"><svg width="16" height="14" viewBox="0 0 16 14"><rect x=".5" y="1.500" width="15" height="11" fill="#fff" stroke="#9a9a9a" /><path d="M3 4.500l1 1 2-2.500M3 8.500l1 1 2-2.500" fill="none" stroke="#3a90d8" /><path d="M8 5h5M8 9h5" stroke="#b0b0b0" /></svg></button>
      </div>
      <div class="volumes">
        <table>
          <colgroup><col v-for="(h, i) in volumeHead" :key="i" :class="'v' + i" /></colgroup>
          <thead><tr><th v-for="h in volumeHead" :key="h"><div>{{ h }}</div></th></tr></thead>
          <tbody>
            <tr v-for="(r, ri) in volumes" :key="ri">
              <td v-for="(c, i) in r" :key="i"><svg v-if="i === 0" width="14" height="10"><use :href="ri === 6 ? '#usb' : '#hdd'" /></svg>{{ c }}</td>
              <td></td>
            </tr>
          </tbody>
        </table>
      </div>
      <div class="disks">
        <div v-for="d in disks" :key="d.title" class="disk">
          <div class="disk-info">
            <strong><svg width="14" height="10"><use :href="'#' + d.icon" /></svg>{{ d.title }}</strong>
            <span>{{ d.kind }}</span><span>{{ d.size }}</span><span>{{ d.state }}</span>
          </div>
          <div class="track">
            <div v-for="(p, i) in d.parts" :key="i" class="part" :style="{ width: p.width + 'px' }">
              <div class="strip" :class="{ free: p.free }"></div>
              <div class="box"><div class="clip"><strong>{{ p.name }}</strong><span>{{ p.size }}</span><span>{{ p.status }}</span></div></div>
            </div>
          </div>
        </div>
        <div class="disk">
          <div class="disk-info optical"><strong><svg width="16" height="16"><use href="#cdrom" /></svg>CD-ROM 0</strong></div>
          <div class="rest"></div>
        </div>
      </div>
    </section>

    <svg class="notes" aria-hidden="true">
      <g fill="none" stroke="#c00000" stroke-width="3">
        <path d="M622 325C624 255 690 220 891 220L1050 220C1230 218 1322 195 1331 128" />
        <path d="M394 388L530 389C771 391 1000 390 1132 420C1220 447 1290 525 1346 638" />
        <path d="M494 425L530 427C600 428 640 428 646 396" />
        <path d="M800 633C890 622 990 600 1050 585C1090 575 1120 567 1146 567C1180 567 1200 580 1312 636" />
        <path d="M272 1029C232 1020 211 880 210 790C210 740 213 700 223 672" />
        <g stroke-width="2">
          <ellipse cx="400" cy="419" rx="84" ry="15" />
          <ellipse cx="650" cy="364" rx="78" ry="15" />
          <rect x="169" y="621" width="656" height="48" />
        </g>
      </g>
      <g fill="#c00000">
        <path d="M1332 115L1339 130L1324 129z" />
        <path d="M1352 652L1338 642L1352 635z" />
        <path d="M646 382L653 397L638 397z" />
        <path d="M1324 642L1308 643L1316 630z" />
        <path d="M229 657L230 673L216 668z" />
      </g>
    </svg>
  </div>
</template>

<style>
body { margin: 0; overflow: hidden; }
</style>

<style scoped>
.desktop { position: relative; height: 100vh; overflow: hidden; background: #000; font-family: "Open Sans", "Noto Sans", sans-serif; font-size: 12px; line-height: 16px; color: #000; }
.desktop * { box-sizing: border-box; }
.sprite { position: absolute; width: 0; height: 0; }
button { border: 0; padding: 0; background: none; font: inherit; color: inherit; display: flex; align-items: center; justify-content: center; }
h2, h3 { margin: 0; font-size: inherit; font-weight: 400; }
svg { flex: none; }
.i10 { width: 10px; height: 10px; }
.i12 { width: 12px; height: 12px; }
.i14 { width: 14px; height: 14px; }
.i16 { width: 16px; height: 16px; }
.i48 { width: 48px; height: 48px; overflow: visible; }
.faded { color: #999; }

.tab-chip { position: absolute; left: 1533px; right: 0; top: 16px; height: 26px; background: #1b1e38; color: #8d92a8; display: flex; align-items: center; gap: 5px; padding-left: 8px; font-size: 13px; overflow: hidden; }
.red-strip { position: absolute; left: 45px; top: 712px; width: 140px; height: 4px; background: #360003; }
.blank-window { position: absolute; left: 2px; top: 716px; bottom: 0; width: 170px; background: #fff; }
.red-tile { position: absolute; left: 900px; top: 1050px; bottom: 0; width: 45px; background: #2d0000; border-right: 1px solid #570000; overflow: hidden; }
.red-tile i { position: absolute; left: -8px; top: 14px; width: 30px; height: 44px; border-radius: 50%; background: #3a74d0; }

.window { position: absolute; display: flex; flex-direction: column; background: #fff; border: 1px solid #8a8a8a; box-shadow: 0 3px 18px 1px rgba(0, 0, 0, .35); }
.explorer { border-left: 0; border-top: 0; }
.win-pc { left: 0; top: 0; width: 1065px; height: 712px; }
.win-d { left: 897px; right: -20px; top: 42px; height: 600px; }
.win-g { left: 903px; right: -26px; top: 586px; height: 465px; border-top: 1px solid #8a8a8a; }

.title { display: flex; align-items: center; height: 29px; flex: none; }
.win-pc .title { padding: 0 0 2px 8px; }
.title .sep { width: 1px; height: 12px; background: #8c8c8c; margin: 0 7px; }
.quick { width: 14px; height: 18px; margin: 0 4px; }
.quick-more { margin-left: 3px; }
.caption { margin-left: auto; display: flex; color: #8a8a8a; }
.caption button { width: 46px; height: 26px; }
.tabs { display: flex; height: 24px; flex: none; border-bottom: 1px solid #dadbdc; color: #333; }
.file-tab { width: 56px; background: #0063b1; color: #fff; }
.tabs .tab { padding: 0 14px; font-size: 11px; }
.tabs-end { margin-left: auto; display: flex; align-items: center; gap: 8px; padding-right: 3px; color: #8a8a8a; }
.help { width: 16px; height: 16px; border-radius: 50%; background: #0b63c4; border: 1px solid #084a96; color: #fff; font-weight: 700; }

.bar { display: flex; padding: 5px 0 7px; flex: none; height: 42px; }
.history { width: 106px; display: flex; align-items: center; padding-left: 12px; gap: 15px; }
.history svg:nth-child(3) { margin: 0 -6px 0 -1px; }
.address { width: 228px; height: 30px; border: 1px solid #d9d9d9; display: flex; align-items: center; padding-left: 2px; gap: 4px; color: #000; }
.address .crumb { margin: 0 2px 0 3px; }
.drive-address { margin-left: 106px; padding-left: 54px; }
.drive-address .crumb { margin-left: 0; }
.drop { margin-left: auto; width: 28px; height: 28px; color: #6a6a6a; }
.refresh { width: 33px; height: 28px; border-left: 1px solid #d9d9d9; margin-left: -4px; padding-left: 1px; }
.search { flex: 1; margin: 0 12px; height: 30px; border: 1px solid #d9d9d9; display: flex; align-items: center; padding-left: 14px; gap: 12px; }
.search input { border: 0; outline: 0; padding: 0; font: inherit; flex: 1; min-width: 0; background: none; }
.search input::placeholder { color: #6d6d6d; opacity: 1; }

.body { display: flex; flex: 1; min-height: 0; }
.tree { width: 246px; flex: none; overflow: hidden; padding-top: 16px; display: flex; flex-direction: column; }
.node { display: flex; align-items: center; gap: 5px; height: 24px; flex: none; color: #000; text-decoration: none; white-space: nowrap; }
.l1 { padding-left: 24px; }
.l2 { padding-left: 32px; }
.gap { margin-bottom: 8px; }
.on { background: #d9d9d9; }
.win-d .tree { padding-top: 360px; }
.win-g .tree { padding-top: 32px; }
.scroll { width: 16px; margin-left: 1px; flex: none; background: #f0f0f0; display: flex; flex-direction: column; align-items: center; padding-top: 4px; }
.thumb { width: 15px; background: #cdcdcd; margin-top: 3px; flex: 1; }
.down { display: none; transform: rotate(180deg); margin: auto 0 3px; }
.win-g .thumb { flex: none; height: 148px; margin-top: 56px; }
.win-g .down { display: block; }

.content { flex: 1; min-width: 0; margin-left: 2px; border-left: 1px solid #f2f2f2; padding-top: 6px; overflow: hidden; }
.group { display: flex; align-items: center; height: 27px; font-size: 14px; color: #1e3287; padding: 0 7px 2px 6px; }
.group svg { color: #7a7a7a; margin-right: 4px; }
.group::after { content: ""; flex: 1; height: 1px; background: #e2e2e2; margin-left: 8px; }
.tiles { display: grid; grid-template-columns: repeat(3, 254px); grid-auto-rows: 56px; padding-left: 24px; }
.tile { display: flex; padding-top: 3px; }
.tile .i48 { margin-top: 1px; }
.third { grid-column: 3; padding-left: 48px; }
.info { width: 188px; white-space: nowrap; display: flex; flex-direction: column; }
.single { padding-top: 7px; }
.meter { height: 13px; flex: none; border: 1px solid #bcbcbc; background: #e6e6e6; margin: 1px 0; display: flex; }
.meter b { background: #26a0da; }
.muted { color: #6d6d6d; font-size: 11px; }

.status { height: 23px; flex: none; display: flex; align-items: center; padding-left: 14px; color: #1e395b; font-size: 11px; }
.status i { width: 1px; height: 12px; background: #e5e5e5; margin-left: 10px; }
.views { margin-left: auto; display: flex; align-items: center; gap: 6px; padding-right: 7px; margin-bottom: 4px; }

.drive-ribbon { display: flex; height: 54px; flex: none; border-bottom: 1px solid #dadbdc; color: #333; padding-top: 3px; }
.ribbon-left { width: 229px; display: flex; justify-content: flex-end; align-items: flex-end; padding: 0 17px 3px 0; }
.tool-tab { width: 86px; text-align: center; }
.manage { height: 27px; line-height: 28px; }
.win-d .manage { background: #c0f09e; }
.tools { width: 100%; height: 18px; padding-top: 6px; border: 1px solid #cfcfcf; border-width: 0 1px; font-size: 11px; }
.drive-ribbon .faded { padding: 4px 0 0 13px; }
.files { flex: 1; margin-left: 4px; border-collapse: collapse; table-layout: fixed; width: 100%; align-self: flex-start; }
.c-name { width: 272px; }
.c-date { width: 145px; }
.files th { padding: 0; height: 31px; font-weight: 400; text-align: left; vertical-align: top; color: #4c607a; }
.th { height: 25px; line-height: 26px; border-right: 1px solid #e5e5e5; padding-left: 6px; position: relative; }
th:first-child .th { padding-left: 17px; }
.sort { position: absolute; left: 67px; top: 0; }
.files td { padding: 0; height: 21px; white-space: nowrap; }
.file { display: flex; align-items: center; gap: 4px; padding-left: 18px; }
.files td.date { color: #6d6d6d; padding-left: 6px; font-size: 11px; }

.dm { left: 166px; top: 437px; bottom: -10px; width: 754px; background: #f0f0f0; border-color: #6b6b6b; overflow: hidden; font-size: 11px; }
.dm strong { font-size: 12px; }
.dm .title { background: #fff; height: 30px; padding-left: 9px; gap: 5px; }
.dm .caption { color: #000; padding-bottom: 2px; }
.menu { display: flex; height: 23px; flex: none; background: #fff; border-bottom: 1px solid #b4b4b4; padding-left: 10px; gap: 17px; }
.tools-row { display: flex; align-items: center; height: 23px; flex: none; background: #fff; border-bottom: 1px solid #d9d9d9; padding: 2px 0 0 5px; gap: 8px; }
.tools-row i { width: 1px; height: 18px; background: #8c8c8c; margin-left: -2px; }
.volumes { height: 245px; flex: none; margin: 6px 1px 0; background: #fff; border-top: 2px solid #6b6b6b; border-left: 1px solid #6b6b6b; }
.volumes table { width: 100%; border-collapse: collapse; table-layout: fixed; }
.v0 { width: 129px; } .v1 { width: 76px; } .v2 { width: 68px; } .v3 { width: 86px; } .v4 { width: 77px; }
.v5 { width: 96px; } .v6 { width: 66px; } .v7 { width: 91px; }
.volumes th { padding: 0; height: 19px; font-weight: 400; text-align: left; }
.volumes th div { height: 19px; line-height: 17px; padding-left: 5px; background: #f0f0f0; border: 1px solid #fff; border-right: 2px solid #777; border-bottom: 2px solid #777; white-space: nowrap; overflow: hidden; }
.volumes th:last-child div { border-right: 0; }
.volumes td { padding: 0 0 0 6px; height: 17px; line-height: 17px; white-space: nowrap; }
.volumes td:first-child { padding-left: 3px; }
.volumes td svg { margin-right: 3px; vertical-align: -1px; }
.disks { margin: 5px 1px 0; border-top: 2px solid #6b6b6b; padding-top: 7px; flex: 1; border-left: 1px solid #6b6b6b; }
.disk { display: flex; height: 99px; align-items: flex-start; }
.disk-info { width: 104px; flex: none; height: 98px; border-top: 1px solid #fff; border-right: 1px solid #8c8c8c; border-bottom: 1px solid #a0a0a0; padding: 6px 0 0 9px; display: flex; flex-direction: column; line-height: 15px; }
.disk-info strong { display: flex; margin-left: 2px; gap: 3px; }
.optical { padding-top: 4px; }
.optical strong { gap: 1px; line-height: 19px; }
.track { display: flex; height: 97px; border-top: 1px solid #fff; border-right: 1px solid #a0a0a0; border-bottom: 1px solid #a0a0a0; padding: 3px 2px 0 1px; }
.part { height: 89px; flex: none; border-right: 1px solid #fff; border-bottom: 1px solid #a0a0a0; box-shadow: inset -2px 0 #a0a0a0; padding-right: 2px; }
.strip { height: 15px; background: #000080; border-top: 1px solid #fff; border-bottom: 1px solid #a0a0a0; }
.strip.free { background: #000; }
.box { margin: 3px 3px 0; height: 68px; background: #fff; border-top: 1px solid #a0a0a0; border-left: 1px solid #a0a0a0; padding: 1px 3px 0; }
.clip { overflow: hidden; display: flex; flex-direction: column; line-height: 15px; white-space: nowrap; }
.clip strong { height: 15px; }
.rest { flex: 1; border-top: 1px solid #fff; }

.notes { position: absolute; inset: 0; width: 100%; height: 100%; pointer-events: none; filter: drop-shadow(5px 5px 2px rgba(0, 0, 0, .35)); }
</style>
